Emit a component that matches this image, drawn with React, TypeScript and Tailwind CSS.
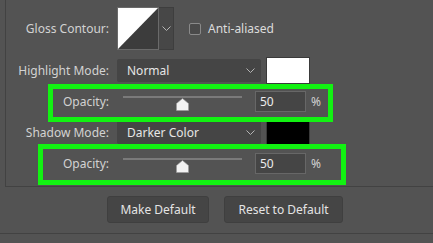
import React from "react";

function Chevron({ className = "" }: { className?: string }) {
  return (
    <svg width="9" height="5" viewBox="0 0 9 5" className={className}>
      <path d="M0.5 0.5 L4.5 4.5 L8.5 0.5" fill="none" stroke="#b4b4b4" strokeWidth="1" />
    </svg>
  );
}

function Label({ children }: { children: React.ReactNode }) {
  return <div className="w-[103px] text-right text-[#d2d2d2] shrink-0">{children}</div>;
}

function ModeSelect({ value }: { value: string }) {
  return (
    <div className="w-[144px] h-[23px] bg-[#454545] rounded-[2px] flex items-center justify-between pl-[10px] pr-[6px] text-[#e6e6e6]">
      <span>{value}</span>
      <Chevron />
    </div>
  );
}

function Slider() {
  return (
    <div className="relative w-[119px] h-[21px] ml-[6px]">
      <div className="absolute left-0 right-0 top-[5px] h-[2px] bg-[#7a7a7a]" />
      <svg className="absolute left-[53px] top-[7px]" width="13" height="13" viewBox="0 0 13 13">
        <path d="M6.5 0.5 L12.5 5.5 L12.5 12.5 L0.5 12.5 L0.5 5.5 Z" fill="#f2f2f2" stroke="#9a9a9a" strokeWidth="0.6" />
      </svg>
    </div>
  );
}

function OpacityRow({ box }: { box: "a" | "b" }) {
  return (
    <div className="relative flex items-center h-[21px] gap-[8px]">
      <Label>Opacity:</Label>
      <Slider />
      <div className="ml-[5px] w-[51px] h-[21px] bg-[#454545] border border-[#676767] flex items-center pl-[4px] text-[#ececec]">
        50
      </div>
      <span className="ml-[-3px] text-[#d2d2d2]">%</span>
      {box === "a" ? (
        <div className="absolute left-[42px] top-[-7px] w-[285px] h-[38px] border-[5px] border-[#12f212]" />
      ) : (
        <div className="absolute left-[32px] top-[-9px] w-[308px] h-[41px] border-[5px] border-[#12f212]" />
      )}
    </div>
  );
}

export default function App() {
  return (
    <div className="w-[433px] h-[243px] bg-[#535353] overflow-hidden text-[12px] font-['Noto_Sans',sans-serif]">
      <div className="ml-[5px] h-[187px] border-l border-b border-[#424242] pt-[7px] flex flex-col gap-[7px]">
        <div className="flex items-center h-[43px] gap-[8px]">
          <Label>Gloss Contour:</Label>
          <div className="flex h-[43px]">
            <div className="w-[42px] h-[43px] border border-[#6a6a6a] bg-[#3c3c3c]">
              <svg width="40" height="41" viewBox="0 0 40 41" className="block">
                <path d="M0 0 L40 0 L0 41 Z" fill="#ffffff" />
              </svg>
            </div>
            <div className="w-[15px] h-[43px] border border-l-0 border-[#3e3e3e] bg-[#474747] flex items-center justify-center">
              <Chevron />
            </div>
          </div>
          <div className="ml-[7px] w-[12px] h-[12px] border border-[#8a8a8a] rounded-[2px] bg-[#4a4a4a]" />
          <span className="ml-[-1px] text-[#dcdcdc]">Anti-aliased</span>
        </div>
        <div className="flex items-center h-[27px] gap-[8px]">
          <Label>Highlight Mode:</Label>
          <ModeSelect value="Normal" />
          <div className="ml-[-3px] w-[44px] h-[27px] bg-white border border-[#3a3a3a]" />
        </div>
        <OpacityRow box="a" />
        <div className="flex items-center h-[27px] gap-[8px]">
          <Label>Shadow Mode:</Label>
          <ModeSelect value="Darker Color" />
          <div className="ml-[-3px] w-[44px] h-[27px] bg-black border border-[#3a3a3a]" />
        </div>
        <OpacityRow box="b" />
      </div>
      <div className="h-[47px] flex items-center gap-[15px] pl-[107px] pb-[1px] border-b border-[#424242]">
        <button className="w-[102px] h-[27px] bg-[#454545] border border-[#3f3f3f] rounded-[3px] text-[#e4e4e4]">
          Make Default
        </button>
        <button className="w-[119px] h-[27px] bg-[#454545] border border-[#3f3f3f] rounded-[3px] text-[#e4e4e4]">
          Reset to Default
        </button>
      </div>
    </div>
  );
}
